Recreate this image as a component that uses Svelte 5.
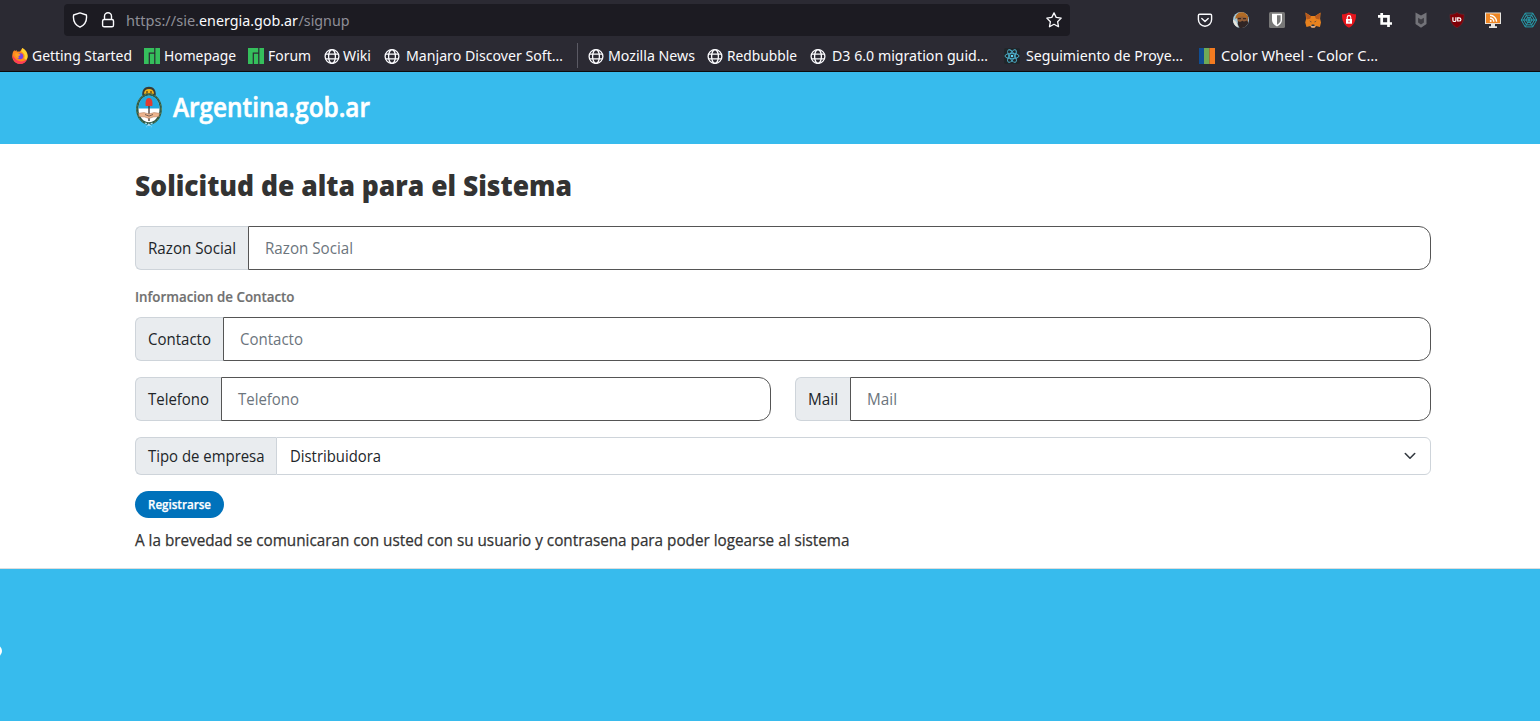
<script>
  const bookmarks = [
    { icon: 'firefox', text: 'Getting Started', width: 100, gap: 4, after: 12 },
    { icon: 'manjaro', text: 'Homepage', width: 72, gap: 4, after: 12 },
    { icon: 'manjaro', text: 'Forum', width: 43, gap: 4, after: 13 },
    { icon: 'globe', text: 'Wiki', width: 28, gap: 3, after: 13 },
    { icon: 'globe', text: 'Manjaro Discover Soft…', width: 157, gap: 6, after: 13 },
    { divider: true, after: 10 },
    { icon: 'globe', text: 'Mozilla News', width: 87, gap: 4, after: 12 },
    { icon: 'globe', text: 'Redbubble', width: 70, gap: 4, after: 13 },
    { icon: 'globe', text: 'D3 6.0 migration guid…', width: 156, gap: 6, after: 16 },
    { icon: 'react', text: 'Seguimiento de Proye…', width: 157, gap: 6, after: 16 },
    { icon: 'wheel', text: 'Color Wheel - Color C…', width: 157, gap: 6, after: 0 }
  ];
  const extensions = ['pocket', 'avatar', 'bitwarden', 'fox', 'lock', 'crop', 'mcafee', 'ublock', 'feed', 'web'];
</script>

{#snippet label(text, width, height, baseline, cls)}
  <svg class="label {cls}" {width} {height}>
    <text x="0" y={baseline} textLength={width} lengthAdjust="spacingAndGlyphs">{text}</text>
  </svg>
{/snippet}

{#snippet icon(name)}
  <svg class="icon" width="16" height="16" viewBox="0 0 16 16" fill="none">
    {#if name === 'firefox'}
      <path fill="#ff8a1e" d="M1 4 2.4 2l.5 1.3L4.5 2l.3 1.6L8 3.4 10.4 0c2.9 1.5 5.2 4.4 5.2 8 0 4.300-3.300 7.800-7.600 7.800S.3 12.500.3 8.200C.3 6.500.5 5.200 1 4Z" />
      <path fill="#fd3b58" d="M.4 7c0 5 3.300 8.900 7.700 8.900 3.400 0 6.100-2 7.100-5-2 2-5 3-8 2.200C4 12.300 2.400 9.500.4 7Z" />
      <path fill="#ffd52e" d="M10.400 0c2.900 1.500 5.200 4.400 5.200 8 0 1.200-.3 2.400-.8 3.400-1.700.6-2.900-.5-2.300-2.600.7-2.600-1.800-4.600-3.400-5.400Z" />
      <circle cx="8.200" cy="8.200" r="3" fill="#7542e5" />
      <path fill="#ff9f24" d="M3 5.500c2-.8 3.500.1 4.700.6l1 .8-2 1c-.6.7-.1 1.400.6 1.800-1.600 1-4.200-.2-4.300-4.200Z" />
    {:else if name === 'manjaro'}
      <path fill="#35bf5c" d="M0 0h10.200v4.500H4.700V16H0ZM5.900 5.700h4.300V16H5.900ZM11.400 0H16v16h-4.600Z" />
    {:else if name === 'globe'}
      <g stroke="#fbfbfe" stroke-width="1.300">
        <circle cx="8" cy="8.500" r="6.900" /><ellipse cx="8" cy="8.500" rx="3.400" ry="6.900" />
        <path d="M1.700 6.200h12.600M1.700 10.800h12.600" />
      </g>
    {:else if name === 'react'}
      <rect width="16" height="16" rx="2" fill="#20262a" />
      <g stroke="#4fb8d5" stroke-width=".9">
        <ellipse cx="8" cy="8" rx="7" ry="2.700" /><ellipse cx="8" cy="8" rx="7" ry="2.700" transform="rotate(60 8 8)" /><ellipse cx="8" cy="8" rx="7" ry="2.700" transform="rotate(120 8 8)" />
      </g>
      <circle cx="8" cy="8" r="1.300" fill="#61dafb" />
    {:else if name === 'wheel'}
      <path fill="#104e93" d="M0 0h5v16H0Z" /><path fill="#6faa57" d="M5 0h5.500v16H5Z" /><path fill="#f47b20" d="M10.500 0H16v16h-5.500Z" />
    {:else if name === 'shield'}
      <path stroke="#fbfbfe" stroke-width="1.400" stroke-linejoin="round" d="M8 .9 14.400 3c.7 5.100-1.500 9.900-6.400 12.200C3.100 12.900.9 8.100 1.600 3Z" />
    {:else if name === 'padlock'}
      <g stroke="#fbfbfe" stroke-width="1.400"><rect x="2.600" y="7.500" width="10.900" height="7.300" rx="1.600" /><path d="M4.500 7.500V4.300a3.500 3.500 0 0 1 7 0v3.200" /></g>
    {:else if name === 'star'}
      <path stroke="#fbfbfe" stroke-width="1.300" stroke-linejoin="round" d="m8 .9 2.200 4.500 5 .7-3.600 3.600.9 5L8 12.300l-4.500 2.400.9-5L.8 6.100l5-.7Z" />
    {:else if name === 'pocket'}
      <g stroke="#fbfbfe" stroke-width="1.400" stroke-linecap="round" stroke-linejoin="round"><path d="M2.600 2.200h10.800q1.200 0 1.200 1.200v4.200a6.600 6.600 0 0 1-13.200 0V3.400q0-1.200 1.200-1.200Z" /><path d="m4.800 6.400 3.200 3 3.200-3" /></g>
    {:else if name === 'avatar'}
      <circle cx="8" cy="8" r="8" fill="#a5c7d6" />
      <path fill="#e8e5dd" d="M0 8c2 0 4 2 5 7.400C2 14 0 11.500 0 8Z" />
      <path fill="#915d38" d="M3.500 4H15v7l-4 4H6Z" />
      <path fill="#b26b25" d="M2.300 7C2.500 2 6 .3 8.800.3c3.400 0 6 2.600 6.400 6.200l-5-2-4 .3Z" />
      <path fill="#302525" d="M5 9c2 1.600 3 .6 4.500-.2C10.500 10 12 9.500 13.500 8.500l2 2A8 8 0 0 1 6.500 15.900L4.700 12Z" />
      <path stroke="#251d1d" d="M5 6.700h3m2 0h3" />
    {:else if name === 'bitwarden'}
      <rect width="16" height="16" rx="1.500" fill="#777" />
      <path fill="#fff" d="M3 1.700h10V8c0 3-2 4.800-5 6.400C5 12.800 3 11 3 8Z" /><path fill="#777" d="M8 3.200h3.600V8c0 2-1.300 3.400-3.600 4.700Z" />
    {:else if name === 'fox'}
      <path fill="#e8821e" d="m.4.600 5.500 3.400h4.200L15.600.600l-.5 6.200.9 3.700-1.100 4.500-3.800-1-1.300 1.700H6.600l-1.300-1.700-3.800 1L.2 10.500l.9-3.700Z" />
      <path fill="#b85a1e" d="m.6.8 5.500 3.700-1 2.200-3.600.8Zm14.800 0L9.900 4.500l1 2.200 3.600.8Z" />
      <path fill="#24364a" d="m4.300 8.500 2.200 1.200-.3.900Zm7.400 0L9.500 9.700l.3.900ZM6.700 12.500h2.600l.3 1.800H6.400Z" />
      <path fill="#d5bfb2" d="m5.300 13.500 1.100.8h3.200l1.100-.8-1.300 2H6.600Z" />
    {:else if name === 'lock'}
      <path fill="#e4141b" d="M8 .3c2 1.500 4.300 2 7 2C15.300 8 13 13.500 8 15.800 3 13.500.7 8 1 2.300c2.700 0 5-.5 7-2Z" />
      <rect x="5" y="7" width="6" height="4.700" fill="#fff" /><path stroke="#fff" stroke-width="1.100" d="M6.200 7V5.400a1.800 1.800 0 0 1 3.600 0V7" /><path fill="#e4141b" d="M7.500 8.500h1v1.700h-1Z" />
    {:else if name === 'crop'}
      <path stroke="#fff" stroke-width="2.700" d="M1 4.300h10.500V15M4.700 1v10.500H15" />
    {:else if name === 'mcafee'}
      <path fill="#737379" d="m2.500.5 5.500 3 5.500-3v11.500L8 15.800 2.500 12Z" /><path fill="#3d3c43" d="m5.100 5.800 2.900 1.700 2.900-1.700v4.700L8 12.400l-2.900-1.900Z" />
    {:else if name === 'ublock'}
      <path fill="#800007" stroke="#6a2a32" stroke-width=".6" d="M8 .4c2 1.400 4.200 2 7 2 .3 6.600-2 10.800-7 13.300-5-2.500-7.300-6.700-7-13.300 2.800 0 5-.6 7-2Z" />
      <path stroke="#fff" stroke-width="1.200" d="M3.900 5.200v3q0 1.300 1.200 1.300h.6q1.200 0 1.200-1.300v-3M8.700 5.800h1.200q2 0 2 1.600t-2 1.600H8.700Z" />
    {:else if name === 'feed'}
      <path fill="#e7e5e1" d="M0 .4h16v11.700H0ZM6 12h4v2.200h2V16H4v-1.800h2Z" /><path fill="#ee8624" d="M1 1.400h14v9.700H1Z" />
      <g stroke="#fff" stroke-width="1.400"><path d="M5 6a3.800 3.800 0 0 1 3.800 3.800M5 3.200a6.600 6.600 0 0 1 6.600 6.600" /></g><circle cx="5.700" cy="9" r="1" fill="#fff" />
    {:else if name === 'web'}
      <g stroke="#269baa" stroke-width="1"><path d="m4.200 1.100 7.600 0L15.700 8l-3.900 6.900H4.200L.3 8ZM5.300 3.200h5.400L13.400 8l-2.700 4.800H5.300L2.600 8ZM6.500 5.400h3L11 8l-1.500 2.600h-3L5 8Z" /><path d="m4.200 1.100 7.600 13.800M11.800 1.100 4.200 14.900M0 8h16" /></g>
    {/if}
  </svg>
{/snippet}

{#snippet field(name, textWidth, prefixWidth)}
  <div class="field">
    <div class="prefix" style="width:{prefixWidth}px">{@render label(name, textWidth, 24, 18, 'body')}</div>
    <div class="input">{@render label(name, textWidth, 24, 18, 'body hint')}</div>
  </div>
{/snippet}

<div class="browser">
  <div class="toolbar">
    <div class="urlbar">
      {@render icon('shield')}
      {@render icon('padlock')}
      <svg class="label url" width="224" height="24">
        <text y="18"><tspan x="0" textLength="73" lengthAdjust="spacingAndGlyphs">https://sie.</tspan><tspan class="domain" x="73" textLength="99" lengthAdjust="spacingAndGlyphs">energia.gob.ar</tspan><tspan x="172.500" textLength="51" lengthAdjust="spacingAndGlyphs">/signup</tspan></text>
      </svg>
      {@render icon('star')}
    </div>
    <div class="extensions">
      {#each extensions as name}{@render icon(name)}{/each}
    </div>
  </div>
  <div class="bookmarks">
    {#each bookmarks as b}
      {#if b.divider}
        <span class="divider" style="margin-right:{b.after}px"></span>
      {:else}
        <span class="bookmark" style="gap:{b.gap}px;margin-right:{b.after}px">
          {@render icon(b.icon)}
          {@render label(b.text, b.width, 24, 17, 'chrome')}
        </span>
      {/if}
    {/each}
  </div>
</div>

<header>
  <svg class="crest" width="28" height="42" viewBox="0 0 28 42" fill="none">
    <path fill="#3a3c35" d="M7.300 9.500C6.800 4 9.500.7 14 .7s7.200 3.300 6.700 8.800Z" />
    <path fill="#f0b51d" d="M9 7.700C9 4.600 11 3 14 3s5 1.600 5 4.700Z" />
    <path fill="#725019" d="M11 5.300h2v1.500h-2Zm4 0h2v1.500h-2Z" />
    <ellipse cx="14" cy="23" rx="11.700" ry="14.500" fill="#fff" stroke="#2e5946" stroke-width="2.400" />
    <ellipse cx="14" cy="23" rx="12.300" ry="15" stroke="#77945a" stroke-width=".8" stroke-dasharray="1.500 2" />
    <path fill="#20a9e0" d="M3.400 22.500C3.600 14.800 8.200 9.600 14 9.600s10.400 5.200 10.600 12.900Z" />
    <path stroke="#403330" stroke-width="1.300" d="M14 18v17" />
    <path fill="#df3c32" d="M10.700 20c-.7-4.500.5-8 3.300-8s4 3.500 3.300 8Z" />
    <path fill="#edb58f" stroke="#aa7454" stroke-width=".5" d="m3.500 27.300 5.500-.7 5 1.400 5-1.400 5.500.7-.8 3.300-5.500.4-4.200 1.500L9.800 31l-5.500-.4Z" />
    <path stroke="#554740" stroke-width=".8" d="m10 28.500 4 1.600 4-1.600" />
    <path stroke="#a8e0f8" stroke-width="1.300" stroke-dasharray="2 1" d="m10 37 4 1.500 4-1.500M14 38.500l-2.500 2.500M14 38.500l2.500 2.500" />
  </svg>
  {@render label('Argentina.gob.ar', 197, 40, 29, 'brand')}
</header>

<main>
  {@render label('Solicitud de alta para el Sistema', 437, 36, 26, 'title')}
  <div class="first">{@render field('Razon Social', 88, 113)}</div>
  <div class="section">{@render label('Informacion de Contacto', 159.5, 20, 15, 'subtitle')}</div>
  {@render field('Contacto', 63, 88)}
  <div class="columns">
    {@render field('Telefono', 61, 86)}
    {@render field('Mail', 30, 55)}
  </div>
  <div class="field select">
    <div class="prefix">{@render label('Tipo de empresa', 116.5, 24, 18, 'body')}</div>
    <div class="input">
      {@render label('Distribuidora', 91, 24, 18, 'body')}
      <svg width="12" height="8" viewBox="0 0 12 8" fill="none"><path d="m1.300 1.500 4.700 4.700 4.700-4.700" stroke="#343a40" stroke-width="1.600" stroke-linecap="round" stroke-linejoin="round" /></svg>
    </div>
  </div>
  <button>{@render label('Registrarse', 63, 19, 14, 'action')}</button>
  {@render label('A la brevedad se comunicaran con usted con su usuario y contrasena para poder logearse al sistema', 714.5, 22, 16, 'note')}
</main>

<footer><span class="dot"></span></footer>

<style>
  :global(body) { overflow: hidden; background: #fff; }
  :global(#app) { display: flex; flex-direction: column; height: 721px; }
  svg { display: block; flex: none; }
  .label { overflow: visible; font-family: "Open Sans", "Noto Sans", sans-serif; }
  .browser { height: 71px; flex: none; background: #2b2a33; border-bottom: 1px solid #0c0c0d; font-family: "Noto Sans", sans-serif; }
  .toolbar { display: flex; height: 40px; padding-left: 64px; box-sizing: border-box; }
  .urlbar { width: 1006px; height: 32px; margin-top: 4px; padding: 0 8px; box-sizing: border-box; display: flex; align-items: center; background: #1c1b22; border-radius: 4px; }
  .urlbar .icon + .icon { margin-left: 12px; }
  .url { margin-left: 10px; font: 14.400px "Noto Sans", sans-serif; fill: #8f8f98; }
  .domain { fill: #fbfbfe; }
  .urlbar > .icon:last-child { margin-left: auto; }
  .extensions { display: flex; gap: 20px; margin-left: 127px; align-items: center; }
  .bookmarks { display: flex; height: 31px; padding-left: 12px; align-items: center; }
  .bookmark { display: flex; align-items: center; }
  .divider { width: 1px; height: 25px; margin-left: 1px; background: #5b5a64; }
  .chrome { font: 14px "Noto Sans", sans-serif; fill: #fbfbfe; }
  header { height: 72px; flex: none; padding-left: 135px; display: flex; align-items: center; gap: 9.500px; box-sizing: border-box; background: #37bbed; }
  .crest { margin-top: -2px; }
  .brand { font-size: 27px; font-weight: 600; fill: #fff; stroke: #fff; stroke-width: .6px; }
  main { height: 398px; flex: none; padding: 26px 109px 0 135px; border-bottom: 1px solid #ddd; }
  .title { font-size: 28.500px; font-weight: 800; fill: #333; }
  .first { margin-top: 20px; }
  .section { padding: 17px 0 10px; }
  .subtitle { font-size: 14px; font-weight: 600; fill: #707070; stroke: #707070; stroke-width: .2px; }
  .field { display: flex; height: 44px; box-sizing: border-box; }
  .prefix { flex: none; display: flex; align-items: center; padding-left: 12px; box-sizing: border-box; border: 1px solid #ced4da; border-right: 0; border-radius: 6px 0 0 6px; background: #e9ecef; }
  .input { flex: 1; display: flex; align-items: center; padding-left: 16px; border: 1px solid #555; border-radius: 0 12px 12px 0; }
  .body { font-size: 16px; fill: #212529; }
  .hint { fill: #6c757d; }
  .columns { display: grid; grid-template-columns: 636px 1fr; gap: 24px; margin: 16px 0; }
  .select { height: 38px; }
  .select .prefix { width: 141px; }
  .select .input { padding: 0 14px 0 13px; justify-content: space-between; border-color: #ced4da; border-radius: 0 6px 6px 0; }
  button { display: flex; align-items: center; width: 89px; height: 27px; margin: 16px 0 12px; padding: 0 13px; border: 0; border-radius: 14px; background: #0072bb; }
  .action { font-size: 12px; font-weight: 600; fill: #fff; stroke: #fff; stroke-width: .25px; }
  .note { font-size: 16px; font-weight: 500; fill: #333; stroke: #333; stroke-width: .25px; }
  footer { flex: 1; background: #37bbed; overflow: hidden; }
  .dot { display: block; width: 12px; height: 12px; margin: 76px 0 0 -10px; border-radius: 50%; background: #fff; }
</style>
